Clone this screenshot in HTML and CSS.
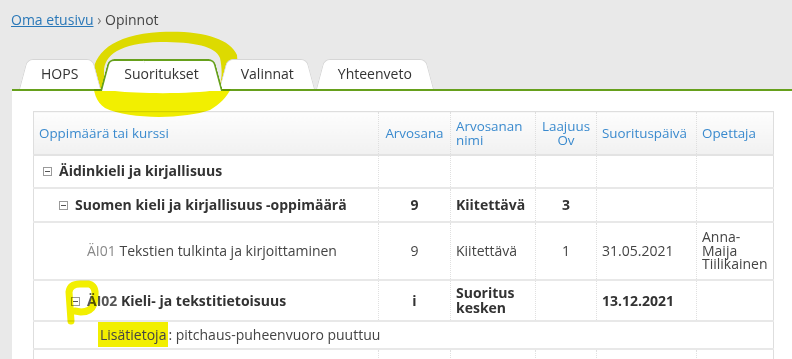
FILE: index.html
```html
<!DOCTYPE html>
<html lang="fi">
<head>
    <meta charset="UTF-8">
    <meta name="viewport" content="width=device-width, initial-scale=1.0">
    <title>Opinnot</title>
    <link rel="stylesheet" href="styles.css">
</head>
<body>
    <nav class="breadcrumb">
        <a href="#">Oma etusivu</a> <span class="sep">›</span> Opinnot
    </nav>

    <ul class="tabs">
        <li class="tab">HOPS</li>
        <li class="tab active">Suoritukset</li>
        <li class="tab">Valinnat</li>
        <li class="tab">Yhteenveto</li>
    </ul>

    <div class="panel">
        <table class="grades">
            <thead>
                <tr>
                    <th class="col-name">Oppimäärä tai kurssi</th>
                    <th class="col-grade center">Arvosana</th>
                    <th class="col-gradename">Arvosanan nimi</th>
                    <th class="col-scope center">Laajuus Ov</th>
                    <th class="col-date">Suorituspäivä</th>
                    <th class="col-teacher">Opettaja</th>
                </tr>
            </thead>
            <tbody>
                <tr class="row-subject">
                    <td class="lvl0"><span class="toggle"></span>Äidinkieli ja kirjallisuus</td>
                    <td></td><td></td><td></td><td></td><td></td>
                </tr>
                <tr class="row-syllabus">
                    <td class="lvl1"><span class="toggle"></span>Suomen kieli ja kirjallisuus -oppimäärä</td>
                    <td class="center">9</td>
                    <td>Kiitettävä</td>
                    <td class="center">3</td>
                    <td></td><td></td>
                </tr>
                <tr class="row-course">
                    <td class="lvl2"><span class="code">ÄI01</span> Tekstien tulkinta ja kirjoittaminen</td>
                    <td class="center">9</td>
                    <td>Kiitettävä</td>
                    <td class="center">1</td>
                    <td>31.05.2021</td>
                    <td class="teacher">Anna-Maija Tiilikainen</td>
                </tr>
                <tr class="row-open">
                    <td class="lvl2 with-toggle"><span class="toggle small"></span><span class="code">ÄI02</span> Kieli- ja tekstitietoisuus</td>
                    <td class="center">i</td>
                    <td>Suoritus kesken</td>
                    <td></td>
                    <td>13.12.2021</td>
                    <td></td>
                </tr>
                <tr class="row-info">
                    <td colspan="6"><span class="hl">Lisätietoja</span>: pitchaus-puheenvuoro puuttuu</td>
                </tr>
                <tr class="row-next">
                    <td></td><td></td><td></td><td></td><td></td><td></td>
                </tr>
            </tbody>
        </table>
    </div>

    <svg class="marks" width="792" height="359" viewBox="0 0 792 359">
        <path fill="#f2ef00" fill-rule="evenodd"
              d="M 93 78 C 92 55, 110 35, 160 32 C 200 30, 230 38, 237 55 C 239 75, 232 98, 210 110 C 185 119, 130 120, 105 108 C 96 102, 93 92, 93 78 Z
                 M 104 72 C 104 55, 120 43, 160 42 C 195 42, 215 46, 220 58 C 223 72, 222 85, 216 90 C 195 94, 140 94, 115 91 C 106 88, 104 82, 104 72 Z"/>
        <path d="M 71 321 L 69 292 Q 70 284 80 284 L 89 284 Q 96 286 95 296 L 94 304 Q 91 312 81 312 L 75 311"
              fill="none" stroke="#f2ef00" stroke-width="7" stroke-linecap="round" stroke-linejoin="round"/>
    </svg>
</body>
</html>
```

FILE: styles.css
```css
body {
    margin: 0;
    background-color: #e9e9e9;
    font-family: "Open Sans", "Liberation Sans", sans-serif;
    color: #333;
}
.breadcrumb {
    padding: 10px 11px 0;
    font-size: 14px;
    line-height: 19px;
    color: #444;
}
.breadcrumb a {
    color: #2a78b8;
}
.breadcrumb .sep {
    color: #777;
}

/* tabs */
.tabs {
    display: flex;
    list-style: none;
    margin: 30px 0 0 12px;
    padding: 0 0 0 7px;
    height: 30px;
    border-bottom: 2px solid #66a01c;
}
.tab {
    position: relative;
    z-index: 1;
    padding: 0 22px;
    line-height: 30px;
    font-size: 14px;
    color: #333;
}
.tab::before,
.tab::after {
    content: '';
    position: absolute;
    top: 0;
    bottom: 0;
    width: 56%;
    background: #fff;
    border: 1px solid #d6d6d6;
    border-bottom: none;
    z-index: -1;
}
.tab::before {
    left: 0;
    border-right: none;
    border-radius: 6px 0 0 0;
    transform: skewX(-15deg);
    transform-origin: bottom left;
}
.tab::after {
    right: 0;
    border-left: none;
    border-radius: 0 6px 0 0;
    transform: skewX(15deg);
    transform-origin: bottom right;
}
.tab.active {
    z-index: 5;
    padding: 0 24px;
}
.tab.active + .tab {
    margin-left: -4px;
}
.tab.active::before,
.tab.active::after {
    bottom: -2px;
    border-width: 2px;
    border-color: #66a01c;
}

/* panel + table */
.panel {
    margin-left: 12px;
    background: #fff;
    padding: 20px 19px 0 21px;
}
.grades {
    width: 740px;
    border-collapse: collapse;
    table-layout: fixed;
    border: 1px solid #dedede;
    font-size: 14px;
}
.grades th,
.grades td {
    box-sizing: border-box;
}
.grades th {
    height: 43px;
    padding: 0 5px;
    font-size: 13.4px;
    font-weight: normal;
    line-height: 14px;
    text-align: left;
    color: #3a8ace;
    background: linear-gradient(#fdfdfd, #f1f1f1);
    border-bottom: 2px solid #e3e3e3;
    border-left: 1px dotted #dedede;
}
.grades td {
    padding: 0 5px;
    line-height: 14px;
    color: #444;
    border-bottom: 2px solid #e8e8e8;
    border-left: 1px dotted #e0e0e0;
}
.col-name { width: 345px; }
.col-grade { width: 72px; }
.col-gradename { width: 85px; }
.col-scope { width: 61px; }
.col-date { width: 100px; }
.col-teacher { width: 77px; }
.grades .center {
    text-align: center;
}

.row-subject { height: 33px; }
.row-syllabus { height: 34px; }
.row-course { height: 58px; }
.row-open { height: 41px; }
.row-info { height: 28px; }
.row-next { height: 30px; }

.row-subject td,
.row-syllabus td,
.row-open td {
    font-weight: bold;
    color: #333;
}
.row-open td {
    line-height: 15px;
}
.grades td.lvl0 { padding-left: 9px; }
.grades td.lvl1 { padding-left: 25px; }
.grades td.lvl2 { padding-left: 53px; }
.grades td.with-toggle { padding-left: 37px; }
.grades td.teacher {
    line-height: 13.5px;
}
.code {
    color: #888;
    font-weight: normal;
}
.row-open .code {
    color: #555;
    font-weight: bold;
}
.row-info td {
    padding-left: 67px;
    color: #444;
}
.hl {
    background: #f2ef00;
    padding: 3px 2px;
    margin-left: -3px;
}

.toggle {
    display: inline-block;
    position: relative;
    width: 7px;
    height: 7px;
    border: 1px solid #9a9a9a;
    margin-right: 7px;
    vertical-align: 0;
}
.toggle::after {
    content: '';
    position: absolute;
    left: 1px;
    right: 1px;
    top: 3px;
    height: 1px;
    background: #555;
}

/* hand-drawn highlight marks */
.marks {
    position: absolute;
    top: 0;
    left: 0;
    pointer-events: none;
    mix-blend-mode: multiply;
}
```
